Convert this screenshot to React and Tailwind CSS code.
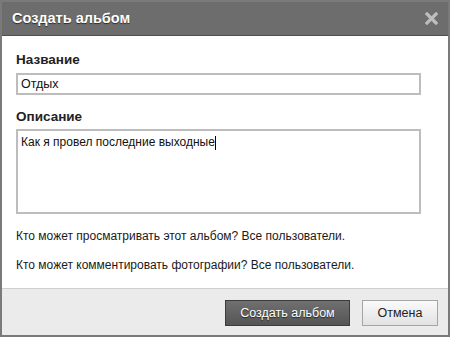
import React from 'react';

const font = { fontFamily: '"Liberation Sans", Arial, sans-serif' };

const CreateAlbumDialog = () => {
    return (
        <div className="w-[450px] h-[337px] flex flex-col bg-white border-2 border-[#7a7a7a] overflow-hidden" style={font}>
            {/* Header */}
            <div className="h-[34px] shrink-0 flex items-center justify-between pl-[10px] pr-[10px] bg-[#6d6d6d] border-b border-[#4f4f4f]">
                <span className="text-white font-bold text-[14.5px] [text-shadow:0_1px_1px_rgba(0,0,0,0.6)]">Создать альбом</span>
                <svg width="13" height="13" viewBox="0 0 13 13">
                    <path d="M2 2 L11 11 M11 2 L2 11" stroke="#bdbdbd" strokeWidth="3.2" strokeLinecap="square" />
                </svg>
            </div>

            {/* Body */}
            <div className="flex-1 flex flex-col px-[14px] pt-[16px]">
                <label className="text-[13.5px] font-bold text-[#222] leading-[16px]">Название</label>
                <div className="mt-[5px] w-[405px] h-[22px] border-2 border-[#bdbdbd] flex items-center px-[3px] text-[12.5px] text-[#111]">
                    Отдых
                </div>
                <label className="mt-[14px] text-[13.5px] font-bold text-[#222] leading-[16px]">Описание</label>
                <div className="mt-[4px] w-[405px] h-[85px] border-2 border-[#bdbdbd] px-[3px] pt-[3px] text-[12px] text-[#111] leading-[16px]">
                    Как я провел последние выходные<span className="inline-block w-px h-[14px] bg-black align-middle"></span>
                </div>
                <p className="mt-[14px] text-[12px] text-[#1a1a1a] leading-[16px]">Кто может просматривать этот альбом? Все пользователи.</p>
                <p className="mt-[13px] text-[12px] text-[#1a1a1a] leading-[16px]">Кто может комментировать фотографии? Все пользователи.</p>
            </div>

            {/* Footer */}
            <div className="h-[47px] shrink-0 flex items-start justify-end gap-[12px] pr-[10px] pt-[11px] bg-[#ebebeb] border-t border-[#cfcfcf]">
                <button className="w-[125px] h-[26px] bg-gradient-to-b from-[#707070] to-[#555] border border-[#3c3c3c] text-white text-[12.5px] [text-shadow:0_1px_1px_rgba(0,0,0,0.6)]">
                    Создать альбом
                </button>
                <button className="w-[76px] h-[26px] bg-gradient-to-b from-[#fafafa] to-[#e2e2e2] border border-[#a5a5a5] text-[#222] text-[12.5px]">
                    Отмена
                </button>
            </div>
        </div>
    );
};

export default CreateAlbumDialog;
